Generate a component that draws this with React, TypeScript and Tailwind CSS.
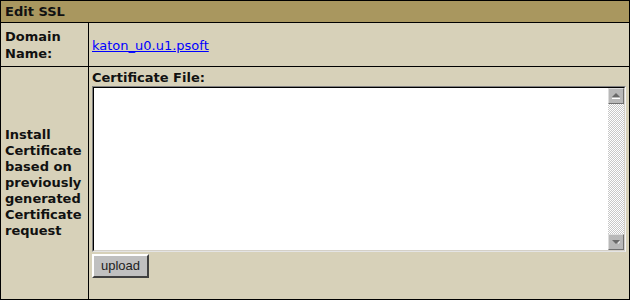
import React from 'react';

const ArrowButton: React.FC<{ dir: 'up' | 'down' }> = ({ dir }) => (
  <div className="w-[16px] h-[16px] bg-[#b8b8b8] border border-t-[#dcdcdc] border-l-[#dcdcdc] border-b-[#707070] border-r-[#707070] flex items-center justify-center">
    <svg width="10" height="8" viewBox="0 0 10 8">
      {dir === 'up' ? (
        <>
          <polygon points="5,1 9,5 1,5" fill="#6a6a6a" />
          <rect x="1" y="6" width="8" height="1" fill="#ffffff" />
        </>
      ) : (
        <>
          <polygon points="1,2 9,2 5,6" fill="#6a6a6a" />
          <polygon points="7,5 9,3 9,4 7,6" fill="#ffffff" />
        </>
      )}
    </svg>
  </div>
);

const App: React.FC = () => {
  return (
    <div className="w-[630px] h-[300px] border border-black bg-[#d7d1b9] flex flex-col font-['DejaVu_Sans',sans-serif] text-[13px] leading-4 text-[#111]">
      {/* Header */}
      <div className="h-[22px] shrink-0 bg-[#a9975f] border-b border-black px-[4px] font-bold flex items-center">
        Edit SSL
      </div>

      {/* Domain row */}
      <div className="h-[44px] shrink-0 grid grid-cols-[88px_1fr] border-b border-black">
        <div className="border-r border-black px-[4px] font-bold flex items-center leading-[17px]">
          Domain
          <br />
          Name:
        </div>
        <div className="px-[3px] pt-[2px] flex items-center">
          <a href="#" className="text-[#0000ff] underline">
            katon_u0.u1.psoft
          </a>
        </div>
      </div>

      {/* Certificate row */}
      <div className="flex-1 grid grid-cols-[88px_1fr]">
        <div className="border-r border-black px-[4px] font-bold flex items-center">
          Install Certificate based on previously generated Certificate request
        </div>
        <div className="px-[3px] pt-[3px] flex flex-col items-start">
          <div className="font-bold">Certificate File:</div>
          <div className="w-full h-[166px] border border-t-[#808080] border-l-[#808080] border-b-[#e4e4e4] border-r-[#f4f4f4]">
            <div className="w-full h-full border border-t-black border-l-black border-b-[#d4d0c8] border-r-[#d4d0c8] bg-white flex">
              <textarea className="flex-1 resize-none outline-none bg-white" />
              <div className="w-[16px] flex flex-col">
                <ArrowButton dir="up" />
                <div className="flex-1 bg-[repeating-conic-gradient(#c8c8c8_0_25%,#ffffff_0_50%)] bg-[length:2px_2px]" />
                <ArrowButton dir="down" />
              </div>
            </div>
          </div>
          <button className="mt-[2px] w-[57px] h-[24px] bg-[#c0c0c0] border-2 border-t-white border-l-white border-b-[#404040] border-r-[#404040] font-['Liberation_Sans',sans-serif] text-[13px] text-[#222]">
            upload
          </button>
        </div>
      </div>
    </div>
  );
};

export default App;
